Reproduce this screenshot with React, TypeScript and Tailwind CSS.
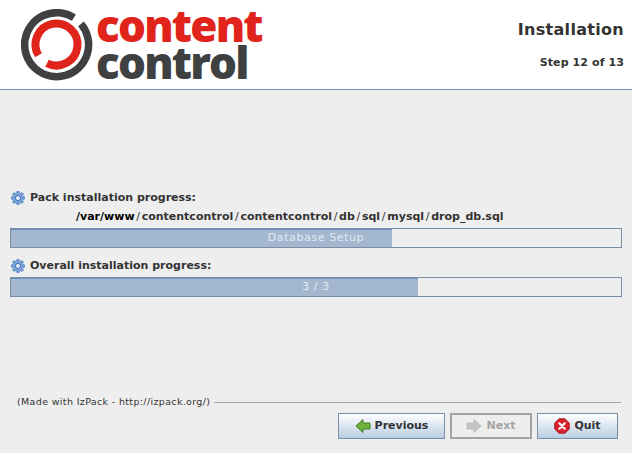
const uiFont = "font-['DejaVu_Sans',sans-serif]";

const pathParts = ["contentcontrol", "contentcontrol", "db", "sql", "mysql", "drop_db.sql"];

function GearIcon() {
  const teeth = [0, 45, 90, 135, 180, 225, 270, 315];
  return (
    <svg width="14" height="14" viewBox="0 0 14 14" className="shrink-0">
      {teeth.map((a) => (
        <rect key={a} x="5.6" y="0.3" width="2.8" height="3.2" rx="0.7" fill="#6d9ad8" stroke="#3f6fb5" strokeWidth="0.5" transform={`rotate(${a} 7 7)`} />
      ))}
      <circle cx="7" cy="7" r="4.4" fill="#7fa8e0" />
      <circle cx="7" cy="7" r="2.6" fill="#dfe9f7" stroke="#3f6fb5" strokeWidth="1" />
    </svg>
  );
}

function Logo() {
  return (
    <div className="flex items-center">
      <svg width="72" height="72" viewBox="0 0 72 72" className="shrink-0">
        <path d="M52.9 8.7 A32 32 0 1 0 60 14.9" fill="none" stroke="#3f4042" strokeWidth="7.5" />
        <path d="M17.5 46.3 A21 21 0 1 1 26 54.2" fill="none" stroke="#e0241b" strokeWidth="8" />
      </svg>
      <div className="ml-[3px] mt-[-1px] flex flex-col font-['Open_Sans',sans-serif] font-extrabold text-[44px] leading-[37px] tracking-[-1.8px]">
        <span className="text-[#e0241b]">content</span>
        <span className="text-[#3f4042]">control</span>
      </div>
    </div>
  );
}

function ProgressBar({ label, percent }: { label: string; percent: number }) {
  return (
    <div className="relative h-[20px] w-full border border-[#7a8ea8] bg-[#eeeeee]">
      <div className="h-full border-t border-[#6f8fc0] bg-[#a3b8cf]" style={{ width: `${percent}%` }} />
      <div className="absolute inset-0 flex items-center justify-center text-[11px] tracking-[0.6px] text-[#e3e9f0]">
        {label}
      </div>
    </div>
  );
}

function NavButton({
  label,
  icon,
  width,
  disabled,
}: {
  label: string;
  icon: React.ReactNode;
  width: string;
  disabled?: boolean;
}) {
  return (
    <button
      className={
        disabled
          ? `flex h-[26px] ${width} items-center justify-center gap-[4px] border-2 border-[#a3a3a3] bg-[#eeeeee] text-[11px] font-bold text-[#a3a3a3]`
          : `flex h-[26px] ${width} items-center justify-center gap-[4px] border border-[#7a8ea8] bg-gradient-to-b from-white to-[#b9cde3] text-[11px] font-bold text-[#333333]`
      }
    >
      {icon}
      {label}
    </button>
  );
}

export default function App() {
  return (
    <div className={`flex h-[453px] w-[632px] flex-col overflow-hidden bg-[#eeeeee] ${uiFont}`}>
      <header className="flex h-[90px] shrink-0 items-start justify-between border-b border-[#6f8fc0] bg-white pl-[21px] pr-[8px]">
        <div className="pt-[8px]">
          <Logo />
        </div>
        <div className="flex flex-col items-end pt-[19px] text-[#333333]">
          <h1 className="text-[16px] font-bold leading-[22px] tracking-[0.3px]">Installation</h1>
          <p className="mt-[15px] text-[11px] font-bold leading-[14px] tracking-[0.1px]">Step 12 of 13</p>
        </div>
      </header>

      <main className="flex flex-1 flex-col px-[10px] pt-[101px]">
        <div className="flex h-[14px] items-center gap-[5px] pl-px text-[11px] font-bold text-[#333333]">
          <GearIcon />
          Pack installation progress:
        </div>
        <div className="mt-[5px] flex h-[14px] pl-[66px] text-[11px] font-bold leading-[14px] text-[#333333]">
          <span className="text-black">/var/www</span>
          {pathParts.map((part, i) => (
            <span key={i}>
              <span className="mx-[1.7px] font-normal">/</span>
              {part}
            </span>
          ))}
        </div>
        <div className="mt-[4px]">
          <ProgressBar label="Database Setup" percent={62.4} />
        </div>
        <div className="mt-[11px] flex h-[14px] items-center gap-[5px] pl-px text-[11px] font-bold text-[#333333]">
          <GearIcon />
          Overall installation progress:
        </div>
        <div className="mt-[4px]">
          <ProgressBar label="3 / 3" percent={66.7} />
        </div>
      </main>

      <footer className="flex shrink-0 flex-col px-[10px] pb-[14px]">
        <div className="flex items-center pl-[7px] pr-px">
          <span className="text-[9.5px] leading-[14px] tracking-[0.35px] text-[#333333]">
            (Made with IzPack - http://izpack.org/)
          </span>
          <div className="ml-[4px] h-px flex-1 bg-[#a3a3a3]" />
        </div>
        <div className="mt-[4px] flex justify-end gap-[5px] pr-[4px]">
          <NavButton
            label="Previous"
            width="w-[107px]"
            icon={
              <svg width="16" height="16" viewBox="0 0 16 16">
                <path d="M1 8 L8 1.5 V5 H15 V11 H8 V14.5 Z" fill="#6fb23a" stroke="#3f7f1c" strokeWidth="1" />
              </svg>
            }
          />
          <NavButton
            label="Next"
            width="w-[82px]"
            disabled
            icon={
              <svg width="16" height="16" viewBox="0 0 16 16">
                <path d="M15 8 L8 1.5 V5 H1 V11 H8 V14.5 Z" fill="#c4c4c4" stroke="#bbbbbb" strokeWidth="1" />
              </svg>
            }
          />
          <NavButton
            label="Quit"
            width="w-[81px]"
            icon={
              <svg width="16" height="16" viewBox="0 0 16 16">
                <path d="M5 0.7 H11 L15.3 5 V11 L11 15.3 H5 L0.7 11 V5 Z" fill="#d8202a" stroke="#9c1018" strokeWidth="0.8" />
                <path d="M5.3 5.3 L10.7 10.7 M10.7 5.3 L5.3 10.7" stroke="white" strokeWidth="2.2" strokeLinecap="round" />
              </svg>
            }
          />
        </div>
      </footer>
    </div>
  );
}
